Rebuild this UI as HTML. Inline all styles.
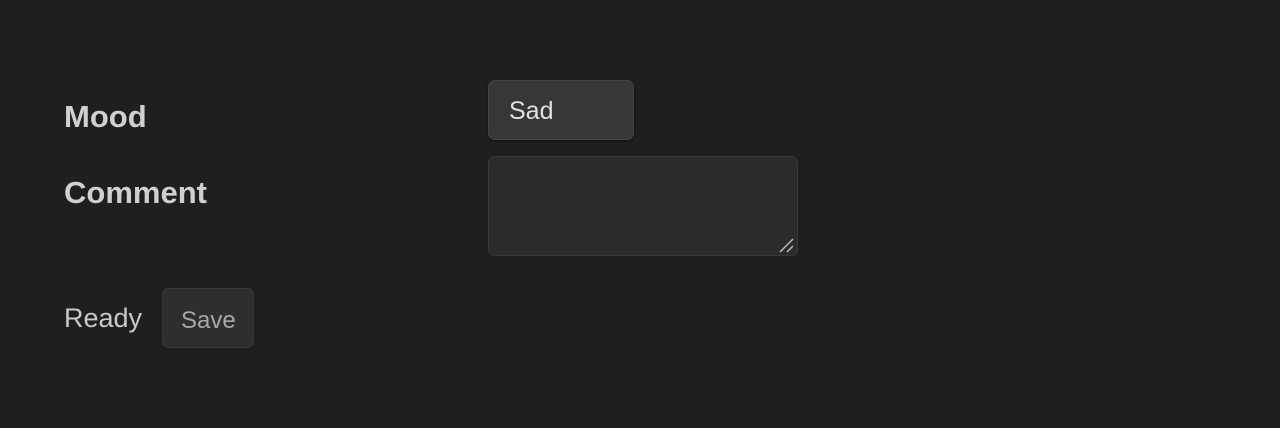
<!DOCTYPE html><html><head><style>
body{margin:0;width:1280px;height:428px;background:#1f1f1f;font-family:"Liberation Sans",sans-serif;position:relative;overflow:hidden}
.t{position:absolute;color:#d0d0d0;white-space:nowrap}
.b{font-weight:bold;font-size:31px}
</style></head><body>
<div class="t b" style="left:64px;top:99px">Mood</div>
<div class="t b" style="left:64px;top:175px">Comment</div>
<div style="position:absolute;left:488px;top:80px;width:146px;height:60px;box-sizing:border-box;background:#373737;border:1px solid #444;border-radius:7px;box-shadow:0 1px 3px rgba(0,0,0,.5)"></div>
<div class="t" style="left:509px;top:97px;font-size:25px;color:#e0e0e0">Sad</div>
<div style="position:absolute;left:488px;top:156px;width:310px;height:100px;box-sizing:border-box;background:#2b2b2b;border:1px solid #3a3a3a;border-radius:7px"></div>
<svg style="position:absolute;left:778px;top:236px" width="18" height="18"><path d="M2 16L15 3M9 16L15 10" stroke="#bbb" stroke-width="1.5"/></svg>
<div class="t" style="left:64px;top:303px;font-size:27px;color:#c8c8c8">Ready</div>
<div style="position:absolute;left:162px;top:288px;width:92px;height:60px;box-sizing:border-box;background:#2e2e2e;border:1px solid #383838;border-radius:7px"></div>
<div class="t" style="left:181px;top:307px;font-size:24px;color:#a8a8a8">Save</div>
</body></html>
